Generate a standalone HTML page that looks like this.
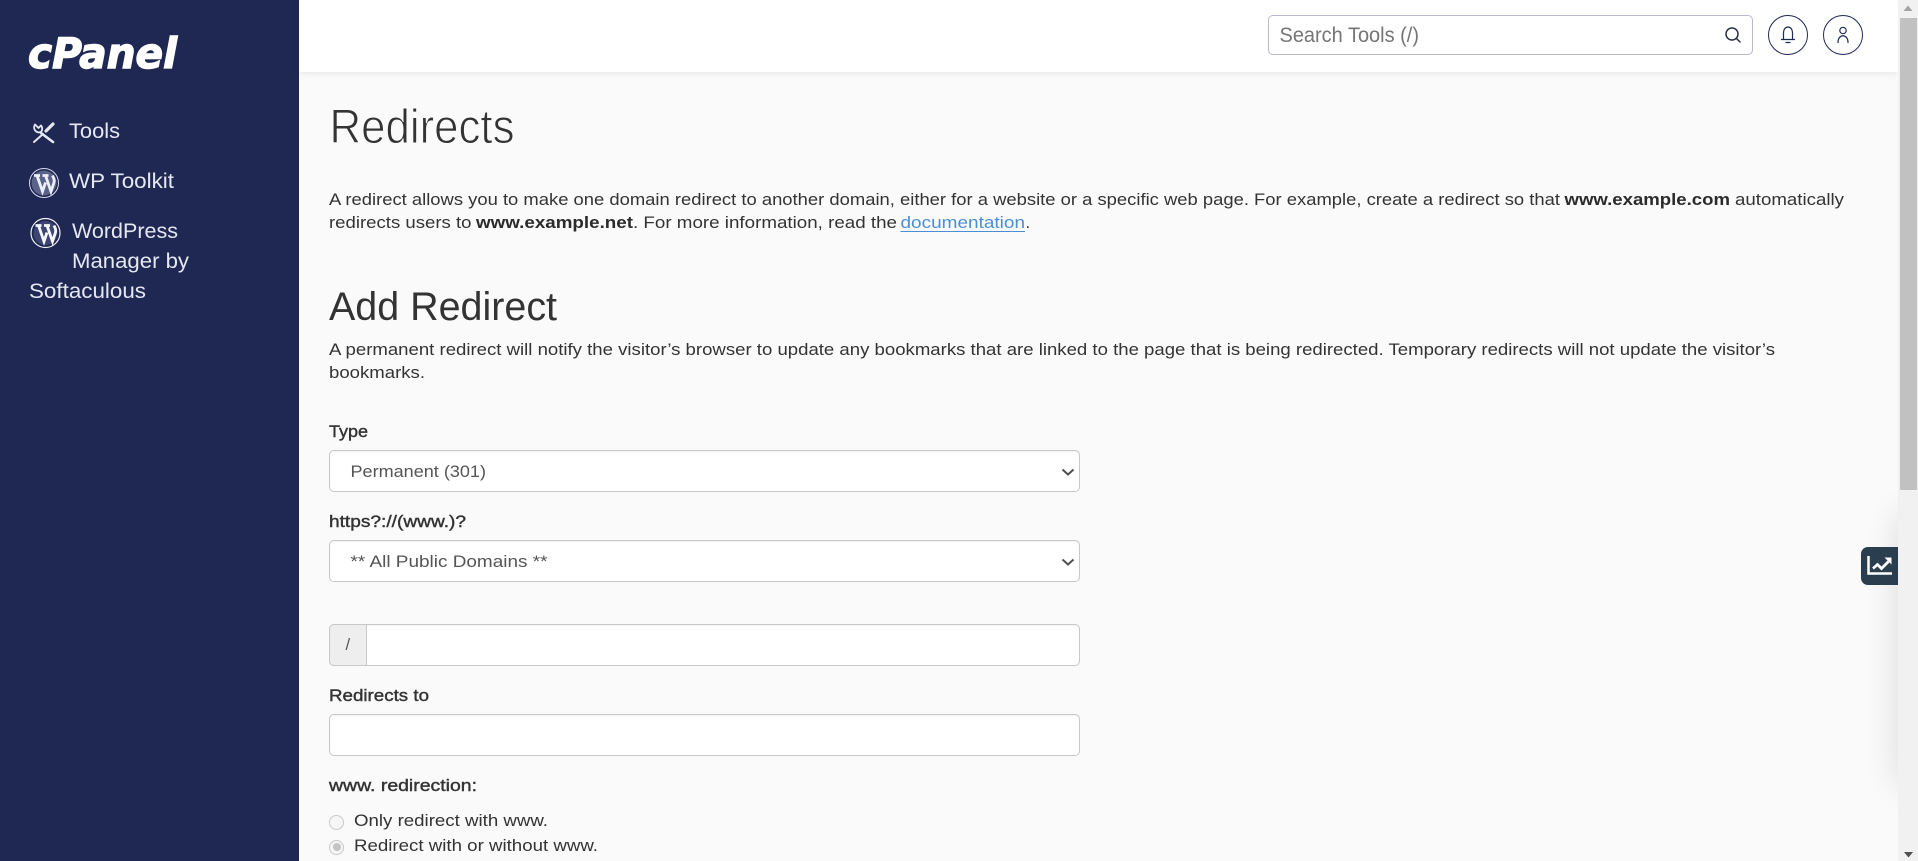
<!DOCTYPE html>
<html lang="en">
<head>
<meta charset="utf-8">
<title>Redirects</title>
<style>
html,body{margin:0;padding:0;width:1918px;height:861px;overflow:hidden;background:#fafafa}
body{position:relative;font-family:"Liberation Sans",sans-serif}
.abs{position:absolute;box-sizing:border-box}
#side{left:0;top:0;width:299px;height:861px;background:#1f2753}
#head{left:299px;top:0;width:1599px;height:72px;background:#fff;box-shadow:0 1px 6px rgba(0,0,0,.09)}
#search{left:1268px;top:15px;width:485px;height:40px;border:1px solid #b9b9cc;border-radius:5px;background:#fff}
.circ{top:15px;width:40px;height:40px;border:1px solid #1f2753;border-radius:50%;background:#fff}
.field{left:329px;width:751px;height:42px;border:1px solid #c8c8c8;border-radius:5px;background:#fff;box-shadow:inset 0 1px 1px rgba(0,0,0,.05)}
#addon{left:329px;top:624px;width:38px;height:42px;background:#eee;border:1px solid #c8c8c8;border-radius:5px 0 0 5px}
.radio{left:329px;width:15px;height:15px;border:1px solid #c8c8c8;border-radius:50%;background:#f6f6f6}
#dot{left:333px;top:843px;width:8px;height:8px;border-radius:50%;background:#c4c4c4}
#panelwrap{left:1800px;top:480px;width:98px;height:340px;overflow:hidden}
#panel{position:absolute;left:98px;top:30px;width:40px;height:280px;border-radius:30px;box-shadow:0 0 34px rgba(0,0,0,.13)}
#chart{left:1861px;top:547px;width:37px;height:38px;background:#2b3e50;border-radius:7px 0 0 7px}
#track{left:1898px;top:0;width:20px;height:861px;background:#f1f1f1}
#thumb{left:1900px;top:18px;width:17px;height:472px;background:#c1c1c1}
svg#o{position:absolute;left:0;top:0;width:1918px;height:861px}
.t{font-family:"Liberation Sans",sans-serif;font-size:16.600px;fill:#333}
.b{font-weight:bold;fill:#2b2b2b}
.l{stroke:#333;stroke-width:.4px}
.s{font-size:20.800px;fill:#e4e8f2}
.g{fill:#555}
</style>
</head>
<body>
<div class="abs" id="side"></div>
<div class="abs" id="head"></div>
<div class="abs" id="search"></div>
<div class="abs circ" style="left:1768px"></div>
<div class="abs circ" style="left:1823px"></div>

<div class="abs field" style="top:450px"></div>
<div class="abs field" style="top:540px"></div>
<div class="abs field" style="top:624px"></div>
<div class="abs" id="addon"></div>
<div class="abs field" style="top:714px"></div>
<div class="abs radio" style="top:815px"></div>
<div class="abs radio" style="top:840px"></div>
<div class="abs" id="dot"></div>

<div class="abs" id="panelwrap"><div id="panel"></div></div>
<div class="abs" id="chart"></div>
<div class="abs" id="track"></div>
<div class="abs" id="thumb"></div>

<svg id="o" viewBox="0 0 1918 861" xmlns="http://www.w3.org/2000/svg">
  <!-- logo -->
  <text x="28" y="68" font-family="DejaVu Sans" font-weight="bold" font-style="italic" font-size="42" fill="#fff" stroke="#fff" stroke-width="1.400" textLength="149" lengthAdjust="spacingAndGlyphs">cPanel</text>

  <!-- tools icon -->
  <g fill="none" stroke="#e4e8f2" stroke-linecap="round">
    <path d="M41 133L53 142" stroke-width="2.600"/>
    <path d="M35 124.500a5 5 0 0 0 6 7.500M41 132a5 5 0 0 0 0-6.500M35 124.500l3.500 3.500M41 125.500L38.500 128" stroke-width="1.800"/>
    <path d="M34 142L43 134" stroke-width="2"/>
    <path d="M46 131L53 124" stroke-width="3.200"/>
  </g>

  <!-- wordpress icons -->
  <g>
    <circle cx="44" cy="183" r="14.500" fill="none" stroke="#d8dcea" stroke-width="1"/>
    <circle cx="44" cy="183" r="12.500" fill="#5b628a"/>
    <path d="M34 175.500h6M37 175.500l5.500 16 3-9M42.500 175.500h6M45.500 175.500l5.500 16 3-9c.8-2.500-.3-4.500-1.500-7" fill="none" stroke="#eceef5" stroke-width="2.800"/>
  </g>
  <g>
    <circle cx="45.500" cy="233" r="14.500" fill="none" stroke="#f0f2f8" stroke-width="1.200"/>
    <circle cx="45.500" cy="233" r="12" fill="#3d4570"/>
    <path d="M35.500 225.500h6M38.500 225.500l5.500 16 3-9M44 225.500h6M47 225.500l5.500 16 3-9c.8-2.500-.3-4.500-1.500-7" fill="none" stroke="#f6f7fb" stroke-width="2.800"/>
  </g>

  <!-- sidebar text -->
  <text class="t s" x="69" y="138" textLength="51" lengthAdjust="spacingAndGlyphs">Tools</text>
  <text class="t s" x="69" y="188" textLength="105" lengthAdjust="spacingAndGlyphs">WP Toolkit</text>
  <text class="t s" x="72" y="238" textLength="106" lengthAdjust="spacingAndGlyphs">WordPress</text>
  <text class="t s" x="72" y="268" textLength="117" lengthAdjust="spacingAndGlyphs">Manager by</text>
  <text class="t s" x="29" y="298" textLength="117" lengthAdjust="spacingAndGlyphs">Softaculous</text>

  <!-- header -->
  <text class="t" x="1279.500" y="42" style="font-size:20.800px;fill:#757575" textLength="139.500" lengthAdjust="spacingAndGlyphs">Search Tools (/)</text>
  <g fill="none" stroke="#2b3142" stroke-width="1.500" stroke-linecap="round">
    <circle cx="1732" cy="34" r="6"/>
    <path d="M1736.500 38.500L1740 42"/>
  </g>
  <g fill="none" stroke="#1f2753" stroke-width="1.200" stroke-linecap="round">
    <path d="M1783.500 39v-6.500a4.500 5.500 0 0 1 9 0V39"/>
    <path d="M1781.500 39.500h13"/>
    <path d="M1786 42.500h4"/>
    <circle cx="1843" cy="30.500" r="3.200"/>
    <path d="M1838 42.500c0-9 10-9 10 0"/>
  </g>

  <!-- title -->
  <text class="t" x="329.500" y="143" style="font-size:48px;fill:#333" stroke="#fafafa" stroke-width="1" textLength="185" lengthAdjust="spacingAndGlyphs">Redirects</text>

  <!-- intro -->
  <text class="t" x="329" y="205" textLength="1231" lengthAdjust="spacingAndGlyphs">A redirect allows you to make one domain redirect to another domain, either for a website or a specific web page. For example, create a redirect so that</text>
  <text class="t b" x="1564.500" y="205" textLength="165.500" lengthAdjust="spacingAndGlyphs">www.example.com</text>
  <text class="t" x="1735" y="205" textLength="109" lengthAdjust="spacingAndGlyphs">automatically</text>
  <text class="t" x="329" y="228" textLength="142.500" lengthAdjust="spacingAndGlyphs">redirects users to</text>
  <text class="t b" x="476" y="228" textLength="157" lengthAdjust="spacingAndGlyphs">www.example.net</text>
  <text class="t" x="633" y="228" textLength="264" lengthAdjust="spacingAndGlyphs">. For more information, read the</text>
  <text class="t" x="900.500" y="228" style="fill:#4a8fd6" textLength="124.500" lengthAdjust="spacingAndGlyphs">documentation</text>
  <path d="M900.500 231.500h124.500" stroke="#4a8fd6" stroke-width="1"/>
  <text class="t" x="1025.500" y="228">.</text>

  <!-- add redirect -->
  <text class="t" x="329" y="320" style="font-size:39.500px;fill:#333" textLength="228" lengthAdjust="spacingAndGlyphs">Add Redirect</text>
  <text class="t" x="329" y="355" textLength="1446" lengthAdjust="spacingAndGlyphs">A permanent redirect will notify the visitor’s browser to update any bookmarks that are linked to the page that is being redirected. Temporary redirects will not update the visitor’s</text>
  <text class="t" x="329" y="378" textLength="96" lengthAdjust="spacingAndGlyphs">bookmarks.</text>

  <!-- form -->
  <text class="t l" x="329" y="437" textLength="39" lengthAdjust="spacingAndGlyphs">Type</text>
  <text class="t g" x="350.500" y="477" textLength="135.500" lengthAdjust="spacingAndGlyphs">Permanent (301)</text>
  <text class="t l" x="329" y="527" textLength="137" lengthAdjust="spacingAndGlyphs">https?://(www.)?</text>
  <text class="t g" x="350.500" y="567" textLength="197" lengthAdjust="spacingAndGlyphs">** All Public Domains **</text>
  <g fill="none" stroke="#505050" stroke-width="2">
    <path d="M1062.500 469.500l5.500 5 5.500-5"/>
    <path d="M1062.500 559.500l5.500 5 5.500-5"/>
  </g>
  <text class="t g" x="345.500" y="650">/</text>
  <text class="t l" x="329" y="701" textLength="100" lengthAdjust="spacingAndGlyphs">Redirects to</text>
  <text class="t l" x="329" y="791" textLength="148" lengthAdjust="spacingAndGlyphs">www. redirection:</text>
  <text class="t" x="354" y="826" textLength="194" lengthAdjust="spacingAndGlyphs">Only redirect with www.</text>
  <text class="t" x="354" y="851" textLength="244" lengthAdjust="spacingAndGlyphs">Redirect with or without www.</text>

  <!-- chart icon -->
  <g fill="none" stroke="#fff">
    <path d="M1868.500 556v17.500h23.500" stroke-width="2.500"/>
    <path d="M1873 568.500l4.500-4 4 4 7-7" stroke-width="2.800"/>
  </g>
  <path d="M1884.500 557.500h7v7z" fill="#fff"/>

  <!-- scrollbar arrows -->
  <path d="M1908 5.500l4.500 5.500h-9z" fill="#a3a3a3"/>
  <path d="M1904 852h9l-4.500 5.500z" fill="#505050"/>
</svg>
</body>
</html>
